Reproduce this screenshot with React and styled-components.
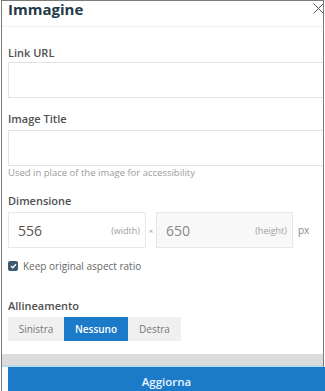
import React from 'react';
import styled, { createGlobalStyle } from 'styled-components';

const GlobalStyle = createGlobalStyle`
  html, body {
    margin: 0;
    padding: 0;
    background: #ffffff;
    font-family: "Open Sans", "Liberation Sans", sans-serif;
  }
  * { box-sizing: border-box; }
`;

const Page = styled.div`
  width: 325px;
  height: 391px;
  overflow: hidden;
  padding-left: 1px;
  background: #fff;
`;

const Dialog = styled.div`
  width: 323px;
  height: 400px;
  border: 1px solid #7c7c7c;
  border-bottom: none;
  display: flex;
  flex-direction: column;
`;

const Header = styled.div`
  height: 26px;
  display: flex;
  align-items: flex-start;
  justify-content: space-between;
  padding-left: 6px;
  border-bottom: 1px solid #f1f1f1;
`;

const Title = styled.h1`
  margin: 0;
  margin-top: -1px;
  font-size: 15px;
  line-height: 18px;
  font-weight: 700;
  color: #23394a;
`;

const Close = styled.svg`
  width: 11px;
  height: 11px;
  margin-top: 2px;
  margin-right: -1px;
`;

const Body = styled.div`
  padding: 18px 0 0 6px;
  display: flex;
  flex-direction: column;
`;

const Label = styled.div`
  font-size: 11px;
  line-height: 16px;
  font-weight: 600;
  color: #505050;
  margin-top: ${(p) => p.$gap || 0}px;
  margin-bottom: ${(p) => p.$below || 1}px;
`;

const TextInput = styled.div`
  height: 36px;
  border: 1px solid #e2e2e2;
  border-right: none;
  background: ${(p) => (p.$disabled ? '#f8f8f8' : '#fff')};
`;

const Hint = styled.div`
  font-size: 9.5px;
  line-height: 14px;
  color: #9b9b9b;
`;

const DimRow = styled.div`
  display: flex;
  align-items: center;
  height: 36px;
`;

const DimBox = styled.div`
  width: ${(p) => p.$w}px;
  height: 36px;
  border: 1px solid #e8e8e8;
  background: ${(p) => (p.$disabled ? '#f8f8f8' : '#fff')};
  display: flex;
  align-items: center;
  justify-content: space-between;
  padding: 0 5px 0 9px;
`;

const DimValue = styled.span`
  font-size: 14px;
  color: ${(p) => (p.$muted ? '#888' : '#555')};
`;

const DimUnit = styled.span`
  font-size: 9px;
  color: #a0a0a0;
`;

const Times = styled.span`
  width: 10px;
  text-align: center;
  font-size: 8px;
  color: #999;
`;

const Px = styled.span`
  font-size: 10px;
  color: #888;
  margin-left: 5px;
`;

const CheckRow = styled.label`
  display: flex;
  align-items: center;
  gap: 5px;
  margin-top: 11px;
  font-size: 10px;
  color: #666;
`;

const CheckBox = styled.span`
  width: 10px;
  height: 10px;
  border-radius: 2px;
  background: #3e5a70;
  display: flex;
  align-items: center;
  justify-content: center;
`;

const Group = styled.div`
  display: flex;
  height: 24px;
`;

const GroupButton = styled.div`
  width: ${(p) => p.$w}px;
  display: flex;
  align-items: center;
  justify-content: center;
  font-size: 10px;
  background: ${(p) => (p.$active ? '#1b7bc8' : '#f0f0f0')};
  color: ${(p) => (p.$active ? '#ffffff' : '#777')};
  font-weight: ${(p) => (p.$active ? 600 : 400)};
`;

const Footer = styled.div`
  margin-top: 13px;
  display: flex;
  flex-direction: column;
`;

const Band = styled.div`
  height: 13px;
  background: #dcdcdc;
  border-bottom: 2px solid #b9dcf2;
`;

const SubmitRow = styled.div`
  padding-left: 6px;
  margin-right: -2px;
`;

const Submit = styled.div`
  height: 28px;
  background: #1b7bc8;
  color: #e8f4ff;
  font-size: 11.5px;
  font-weight: 600;
  display: flex;
  align-items: center;
  justify-content: center;
`;

export default function App() {
  return (
    <Page>
      <GlobalStyle />
      <Dialog>
        <Header>
          <Title>Immagine</Title>
          <Close viewBox="0 0 11 11">
            <path d="M0.5 0.5 L10.5 10.5 M10.5 0.5 L0.5 10.5" stroke="#555" strokeWidth="1" fill="none" />
          </Close>
        </Header>
        <Body>
          <Label>Link URL</Label>
          <TextInput />
          <Label $gap={13} $below={3}>Image Title</Label>
          <TextInput />
          <Hint>Used in place of the image for accessibility</Hint>
          <Label $gap={13} $below={3}>Dimensione</Label>
          <DimRow>
            <DimBox $w={138}>
              <DimValue>556</DimValue>
              <DimUnit>(width)</DimUnit>
            </DimBox>
            <Times>×</Times>
            <DimBox $w={137} $disabled>
              <DimValue $muted>650</DimValue>
              <DimUnit>(height)</DimUnit>
            </DimBox>
            <Px>px</Px>
          </DimRow>
          <CheckRow>
            <CheckBox>
              <svg width="7" height="6" viewBox="0 0 7 6">
                <path d="M1 3 L2.8 4.7 L6 1.2" stroke="#fff" strokeWidth="1.4" fill="none" />
              </svg>
            </CheckBox>
            Keep original aspect ratio
          </CheckRow>
          <Label $gap={25} $below={3}>Allineamento</Label>
          <Group>
            <GroupButton $w={56}>Sinistra</GroupButton>
            <GroupButton $w={64} $active>Nessuno</GroupButton>
            <GroupButton $w={53}>Destra</GroupButton>
          </Group>
        </Body>
        <Footer>
          <Band />
          <SubmitRow>
            <Submit>Aggiorna</Submit>
          </SubmitRow>
        </Footer>
      </Dialog>
    </Page>
  );
}
